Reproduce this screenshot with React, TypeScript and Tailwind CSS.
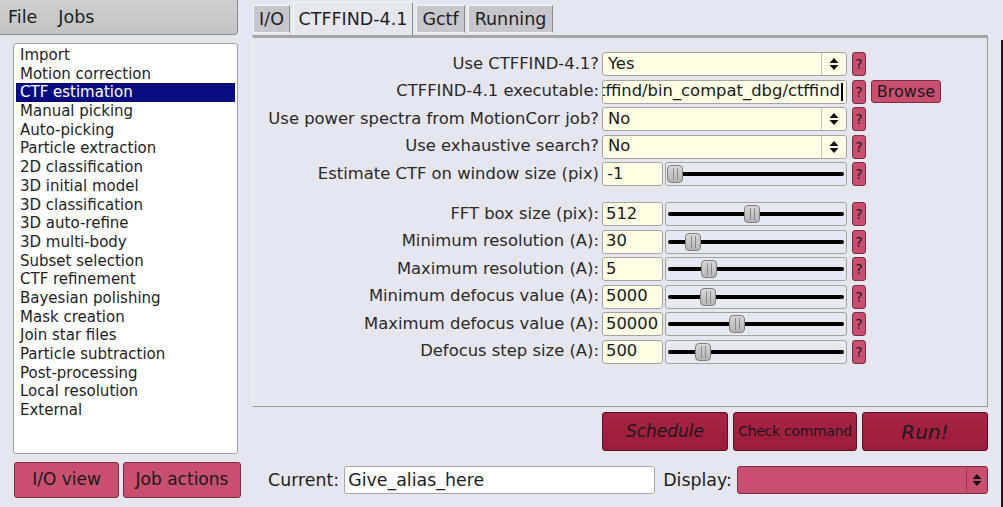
import React from 'react';

const jobs = [
  'Import',
  'Motion correction',
  'CTF estimation',
  'Manual picking',
  'Auto-picking',
  'Particle extraction',
  '2D classification',
  '3D initial model',
  '3D classification',
  '3D auto-refine',
  '3D multi-body',
  'Subset selection',
  'CTF refinement',
  'Bayesian polishing',
  'Mask creation',
  'Join star files',
  'Particle subtraction',
  'Post-processing',
  'Local resolution',
  'External',
];

const sliders = [
  { label: 'FFT box size (pix):', value: '512', thumb: 78 },
  { label: 'Minimum resolution (A):', value: '30', thumb: 19 },
  { label: 'Maximum resolution (A):', value: '5', thumb: 35 },
  { label: 'Minimum defocus value (A):', value: '5000', thumb: 34 },
  { label: 'Maximum defocus value (A):', value: '50000', thumb: 63 },
  { label: 'Defocus step size (A):', value: '500', thumb: 29 },
];

const UpDown: React.FC = () => (
  <svg width="10" height="14" viewBox="0 0 10 14">
    <path d="M5 1 L9.5 6 L0.5 6 Z" fill="#111" />
    <path d="M5 13 L9.5 8 L0.5 8 Z" fill="#111" />
  </svg>
);

const Help: React.FC = () => (
  <div className="ml-[5px] w-[14px] h-[24px] rounded-[3px] border border-[#7e2c44] bg-[#c8506e] flex items-center justify-center text-[14px] leading-none text-[#1a1a1a]">
    ?
  </div>
);

const Label: React.FC<{ text: string }> = ({ text }) => (
  <div className="w-[346px] text-right text-[16.4px] text-[#2a2a2a] whitespace-nowrap">{text}</div>
);

const Choice: React.FC<{ value: string }> = ({ value }) => (
  <div className="ml-[3px] w-[245px] h-[24px] rounded-[3px] border border-[#a4a4a4] bg-[#ffffe6] flex items-center">
    <span className="flex-1 pl-[5px] text-[16.4px] text-[#1a1a1a]">{value}</span>
    <div className="w-[1px] h-[22px] bg-[#c8c8b8]" />
    <div className="w-[24px] flex justify-center">
      <UpDown />
    </div>
  </div>
);

const Slider: React.FC<{ thumb: number }> = ({ thumb }) => (
  <div className="ml-[2px] w-[182px] h-[24px] rounded-[3px] border border-[#a4a4a4] bg-[#e8e8f0] relative flex items-center px-[2px]">
    <div className="w-full h-[4px] rounded-full bg-black" />
    <div
      className="absolute top-[2px] w-[16px] h-[18px] rounded-[4px] border border-[#808080] bg-gradient-to-b from-[#d8d8d8] to-[#b4b4b4] flex items-center justify-center"
      style={{ left: thumb }}
    >
      <div className="w-[5px] h-[12px] border-x border-[#8a8a8a]" />
    </div>
  </div>
);

const Row: React.FC<{ children: React.ReactNode }> = ({ children }) => (
  <div className="flex items-center h-[24px]">{children}</div>
);

export default function App() {
  return (
    <div
      className="w-[1003px] h-[507px] bg-[#e6e6ef] flex overflow-hidden relative"
      style={{ fontFamily: '"DejaVu Sans", sans-serif' }}
    >
      {/* left side */}
      <div className="w-[252px] flex flex-col">
        <div className="w-[238px] h-[35px] rounded-br-[4px] border-r border-b border-[#8c8c8c] bg-gradient-to-b from-[#cfcfcf] to-[#c4c4c4] flex items-center text-[17.5px] text-[#1e1e1e]">
          <span className="ml-[8px]">File</span>
          <span className="ml-[21px]">Jobs</span>
        </div>
        <div className="ml-[13px] mt-[8px] w-[225px] h-[411px] rounded-[3px] border border-[#a0a0a0] bg-white pt-[2px] px-[2px]">
          {jobs.map((j) => (
            <div
              key={j}
              className={
                j === 'CTF estimation'
                  ? 'h-[18.7px] leading-[18.7px] pl-[4px] text-[15px] bg-[#0b0b80] text-white'
                  : 'h-[18.7px] leading-[18.7px] pl-[4px] text-[15px] text-[#1e1e1e]'
              }
            >
              {j}
            </div>
          ))}
        </div>
        <div className="ml-[14px] mt-[8px] flex gap-[4px]">
          <div className="w-[105px] h-[36px] rounded-[3px] border border-[#7e2c44] bg-[#c8506e] flex items-center justify-center text-[17px] text-[#1a1a1a]">
            I/O view
          </div>
          <div className="w-[118px] h-[36px] rounded-[3px] border border-[#7e2c44] bg-[#c8506e] flex items-center justify-center text-[17px] text-[#1a1a1a]">
            Job actions
          </div>
        </div>
      </div>

      {/* right side */}
      <div className="w-[736px] flex flex-col">
        <div className="h-[35px] flex items-end gap-[3px] pl-[1px] text-[17.5px] text-[#1e1e1e]">
          <div className="w-[37px] h-[28px] mb-[2px] border border-[#f4f4f4] border-r-[#8c8c8c] bg-[#c6c6cc] flex items-center justify-center">I/O</div>
          <div className="w-[120px] h-[33px] border border-[#fafafa] border-r-[#8c8c8c] border-b-0 bg-[#e6e6ef] flex items-center justify-center">CTFFIND-4.1</div>
          <div className="w-[49px] h-[28px] mb-[2px] border border-[#f4f4f4] border-r-[#8c8c8c] bg-[#c6c6cc] flex items-center justify-center">Gctf</div>
          <div className="w-[85px] h-[28px] mb-[2px] border border-[#f4f4f4] border-r-[#8c8c8c] bg-[#c6c6cc] flex items-center justify-center">Running</div>
        </div>
        <div className="h-[372px] border-t-[3px] border-t-[#a6a6a6] border-l border-l-[#f6f6fa] border-r border-r-[#9c9c9c] border-b border-b-[#9c9c9c] bg-[#e6e6ef] pt-[14px]">
          <div className="flex flex-col gap-[3.5px]">
            <Row>
              <Label text="Use CTFFIND-4.1?" />
              <Choice value="Yes" />
              <Help />
            </Row>
            <Row>
              <Label text="CTFFIND-4.1 executable:" />
              <div className="ml-[3px] w-[245px] h-[24px] rounded-[3px] border border-[#a4a4a4] bg-[#ffffe6] flex items-center justify-end overflow-hidden pr-[3px]">
                <span className="text-[16.4px] text-[#1a1a1a] whitespace-nowrap">tffind/bin_compat_dbg/ctffind</span>
                <span className="w-[2px] h-[18px] bg-black ml-[1px] shrink-0" />
              </div>
              <Help />
              <div className="ml-[5px] w-[70px] h-[23px] rounded-[3px] border border-[#7e2c44] bg-[#c8506e] flex items-center justify-center text-[16px] text-[#1a1a1a]">
                Browse
              </div>
            </Row>
            <Row>
              <Label text="Use power spectra from MotionCorr job?" />
              <Choice value="No" />
              <Help />
            </Row>
            <Row>
              <Label text="Use exhaustive search?" />
              <Choice value="No" />
              <Help />
            </Row>
            <Row>
              <Label text="Estimate CTF on window size (pix)" />
              <div className="ml-[3px] w-[61px] h-[24px] rounded-[3px] border border-[#a4a4a4] bg-[#ffffe6] flex items-center pl-[4px] text-[16.4px] text-[#1a1a1a]">-1</div>
              <Slider thumb={1} />
              <Help />
            </Row>
          </div>
          <div className="flex flex-col gap-[3.5px] mt-[16px]">
            {sliders.map((s) => (
              <Row key={s.label}>
                <Label text={s.label} />
                <div className="ml-[3px] w-[61px] h-[24px] rounded-[3px] border border-[#a4a4a4] bg-[#ffffe6] flex items-center pl-[3px] text-[16.4px] text-[#1a1a1a]">
                  {s.value}
                </div>
                <Slider thumb={s.thumb} />
                <Help />
              </Row>
            ))}
          </div>
        </div>

        <div className="mt-[5px] h-[39px] flex justify-end gap-[5px]">
          <div className="w-[126px] rounded-[3px] border border-[#5a1026] bg-gradient-to-b from-[#a82444] to-[#9c1a3a] flex items-center justify-center text-[17px] italic text-[#1a1a1a]">
            Schedule
          </div>
          <div className="w-[124px] rounded-[3px] border border-[#5a1026] bg-gradient-to-b from-[#a82444] to-[#9c1a3a] flex items-center justify-center text-[14px] tracking-[-0.3px] text-[#1a1a1a]">
            Check command
          </div>
          <div className="w-[126px] rounded-[3px] border border-[#5a1026] bg-gradient-to-b from-[#a82444] to-[#9c1a3a] flex items-center justify-center text-[20px] italic text-[#1a1a1a]">
            Run!
          </div>
        </div>

        <div className="mt-[15px] h-[28px] flex items-center text-[17.4px] text-[#1e1e1e]">
          <span className="ml-[16px]">Current:</span>
          <div className="ml-[5px] w-[311px] h-[28px] rounded-[3px] border border-[#a4a4a4] bg-white flex items-center pl-[3px]">
            Give_alias_here
          </div>
          <span className="ml-[8px]">Display:</span>
          <div className="ml-[5px] flex-1 h-[28px] rounded-[3px] border border-[#7e2c44] bg-[#c8506e] flex items-center justify-end">
            <div className="w-[1px] h-[24px] bg-[#a0304e]" />
            <div className="w-[20px] flex justify-center">
              <UpDown />
            </div>
          </div>
        </div>
      </div>

      {/* window edge */}
      <div className="flex-1 flex justify-end">
        <div className="mt-[40px] w-[2px] h-[467px] bg-[#1a1a1e]" />
      </div>
    </div>
  );
}
